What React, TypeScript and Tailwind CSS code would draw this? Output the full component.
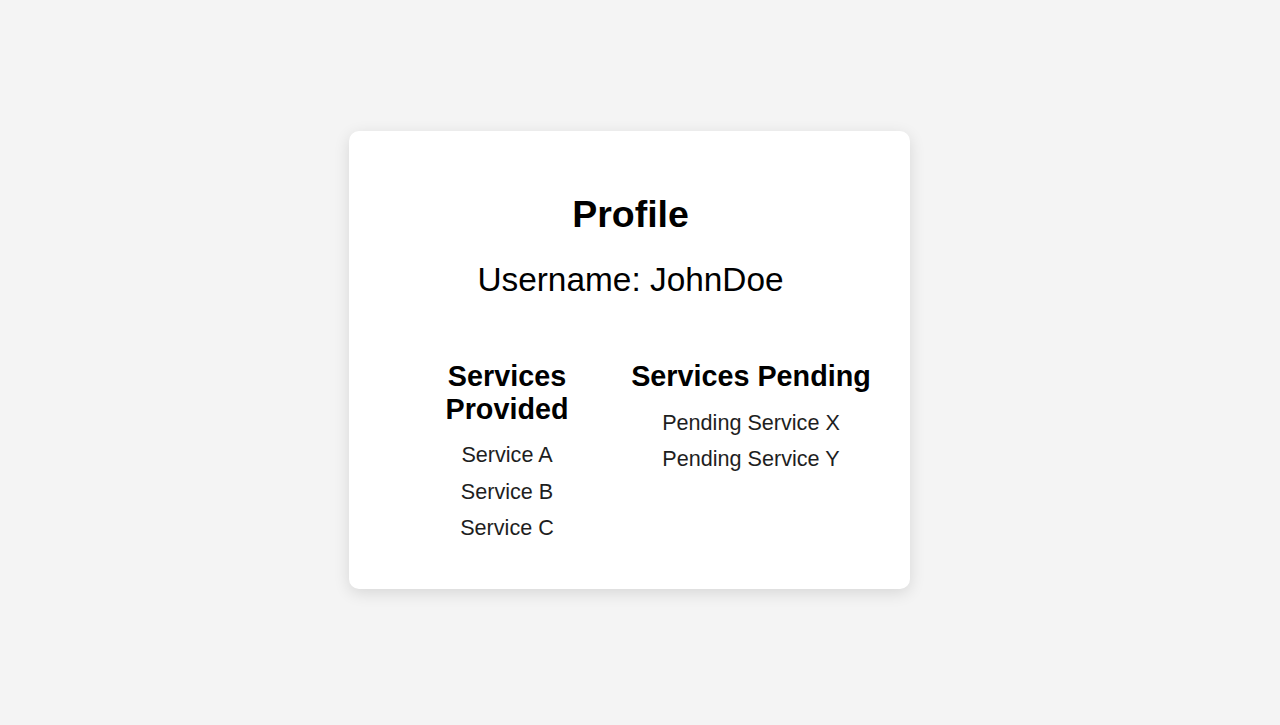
import React from 'react';

const PROVIDED = ['Service A', 'Service B', 'Service C'];
const PENDING = ['Pending Service X', 'Pending Service Y'];

const ServiceColumn: React.FC<{ title: string; items: string[]; width: string }> = ({
  title,
  items,
  width,
}) => (
  <div className={`${width} shrink-0 text-center`}>
    <h2 className="text-[28.75px] leading-[32.5px] font-bold text-black">{title}</h2>
    <ul className="mt-3">
      {items.map((item) => (
        <li key={item} className="text-[21.6px] leading-[36.5px] text-[#1e1e1e]">
          {item}
        </li>
      ))}
    </ul>
  </div>
);

export default function App() {
  return (
    <div
      className="min-h-screen bg-[#f4f4f4] flex items-center justify-center pr-[21px] pb-[5px]"
      style={{ fontFamily: '"Liberation Sans", Arial, sans-serif' }}
    >
      <div className="w-[561px] bg-white rounded-[10px] shadow-[0_4px_16px_rgba(0,0,0,0.12)] pl-10 pr-[38px] pt-[63px] pb-[42px]">
        {/* Header */}
        <h1 className="text-center text-[37.5px] leading-[41px] font-bold text-black">Profile</h1>
        <p className="mt-[26px] text-center text-[33.4px] leading-[38px] text-black">
          Username: JohnDoe
        </p>

        {/* Services */}
        <div className="mt-[61px] flex gap-[5px]">
          <ServiceColumn title="Services Provided" items={PROVIDED} width="w-[236px]" />
          <ServiceColumn title="Services Pending" items={PENDING} width="w-[242px]" />
        </div>
      </div>
    </div>
  );
}
